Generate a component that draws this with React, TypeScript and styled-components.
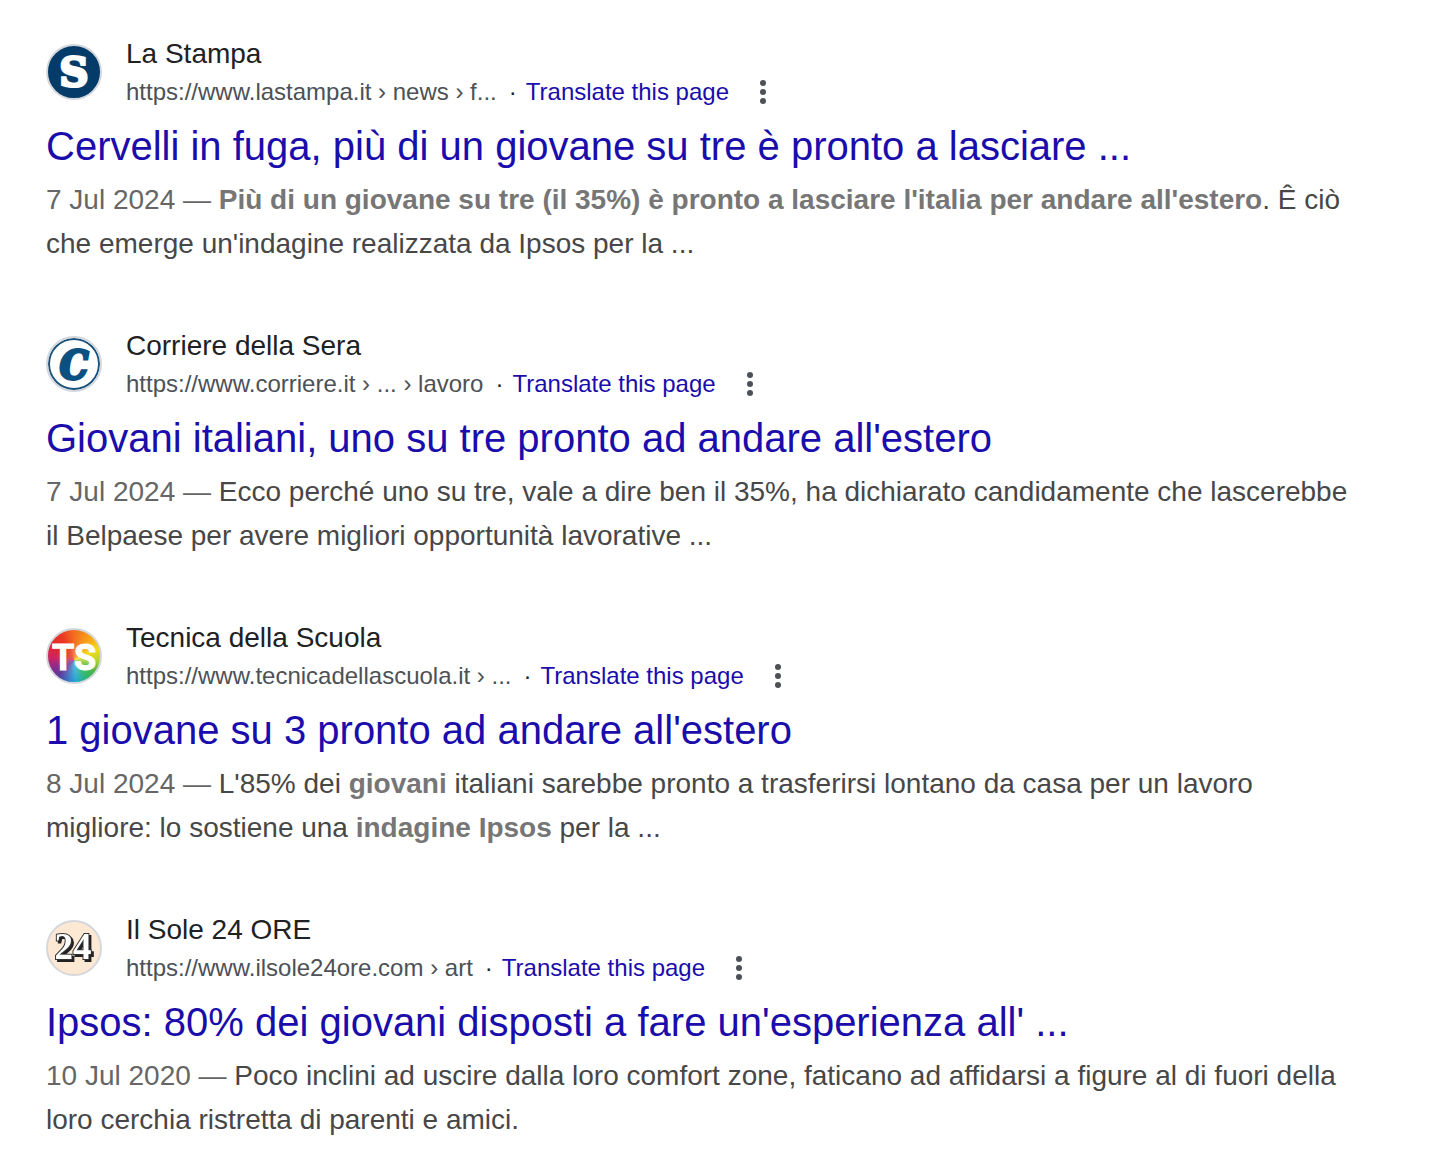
import React from 'react';
import styled, { createGlobalStyle } from 'styled-components';

const Global = createGlobalStyle`
  * { box-sizing: border-box; }
  body { margin: 0; background: #fff; font-family: "Liberation Sans", Arial, sans-serif; }
`;
const Page = styled.main`
  display: flex; flex-direction: column; gap: 60px; padding: 34px 46px 0;
`;
const Result = styled.article`
  display: flex; flex-direction: column;
`;
const Source = styled.header`
  display: flex; align-items: center; gap: 24px; height: 76px;
`;
const Badge = styled.span<{ $fill: string }>`
  flex: none; width: 56px; height: 56px; border-radius: 50%; overflow: hidden;
  border: 2px solid #d4d7dc; background: ${(p) => p.$fill};
  svg { display: block; width: 52px; height: 52px; }
`;
const SourceText = styled.div`
  display: flex; flex-direction: column;
`;
const Site = styled.span`
  font-size: 28px; line-height: 40px; color: #202124;
`;
const Meta = styled.div`
  display: flex; align-items: center; font-size: 24px; line-height: 36px; color: #4d5156; white-space: pre;
`;
const Dot = styled.span`
  padding: 0 9px 0 12px; color: #202124;
`;
const Translate = styled.a`
  color: #1a0dab; text-decoration: none;
`;
const Menu = styled.button`
  display: flex; justify-content: center; width: 24px; margin-left: 22px; padding: 0; border: 0; background: none; cursor: pointer;
`;
const Title = styled.h3`
  margin: 10px 0 0; font-size: 40px; line-height: 52px; font-weight: 400;
`;
const TitleLink = styled.a`
  color: #1a0dab; text-decoration: none;
`;
const Snippet = styled.p`
  max-width: 1304px; margin: 6px 0 0; font-size: 28px; line-height: 44px; color: #474747;
  b { color: #767676; }
`;
const DateText = styled.span`
  color: #666;
`;

const rainbow =
  'radial-gradient(circle at 50% 62%, rgba(255,255,255,.25), transparent 45%), conic-gradient(from 0deg at 50% 58%, #f36c21 0deg, #f7a416 36deg, #f4dc1c 66deg, #b5d334 90deg, #4cb848 118deg, #2bb673 145deg, #27a9d6 175deg, #3b6fc0 200deg, #5b3a9b 225deg, #8c2a8c 250deg, #d0245f 278deg, #e5262c 305deg, #ea3b24 335deg, #f36c21 360deg)';

const logos = {
  stampa: {
    fill: '#053b68',
    mark: (
      <text x="28" y="42" textAnchor="middle" fontFamily="DejaVu Serif, serif" fontWeight="700" fontSize="40" fill="#fff" stroke="#fff" strokeWidth="3">S</text>
    ),
  },
  corriere: {
    fill: '#fff',
    mark: (
      <>
        <circle cx="28" cy="28" r="25" fill="none" stroke="#17517c" strokeWidth="2" />
        <text x="28" y="43" textAnchor="middle" fontFamily="DejaVu Serif Condensed, DejaVu Serif, serif" fontStyle="italic" fontWeight="700" fontSize="40" fill="#0b5080" stroke="#0b5080" strokeWidth="3">C</text>
      </>
    ),
  },
  tecnica: {
    fill: rainbow,
    mark: (
      <text x="28" y="42" textAnchor="middle" fontFamily="Roboto, sans-serif" fontWeight="700" fontSize="36" fill="#fff" stroke="#fff" strokeWidth="1">TS</text>
    ),
  },
  sole: {
    fill: '#fde8d4',
    mark: (
      <text x="27" y="39" textAnchor="middle" fontFamily="Liberation Serif, serif" fontWeight="700" fontSize="37" fill="#fff" stroke="#333" strokeWidth="2" paintOrder="stroke" style={{ filter: 'drop-shadow(2px 2px 0 #222)' }}>24</text>
    ),
  },
};

type EntryProps = {
  logo: keyof typeof logos;
  site: string;
  url: string;
  title: string;
  date: string;
  children: React.ReactNode;
};

function Entry({ logo, site, url, title, date, children }: EntryProps) {
  return (
    <Result>
      <Source>
        <Badge $fill={logos[logo].fill}>
          <svg viewBox="2 2 52 52" aria-hidden="true">{logos[logo].mark}</svg>
        </Badge>
        <SourceText>
          <Site>{site}</Site>
          <Meta>
            <span>{url}</span>
            <Dot>·</Dot>
            <Translate href="#">Translate this page</Translate>
            <Menu type="button" aria-label="About this result">
              <svg width="8" height="26" viewBox="0 0 8 26" fill="#4d5156">
                <circle cx="4" cy="4" r="3" />
                <circle cx="4" cy="13" r="3" />
                <circle cx="4" cy="22" r="3" />
              </svg>
            </Menu>
          </Meta>
        </SourceText>
      </Source>
      <Title><TitleLink href="#">{title}</TitleLink></Title>
      <Snippet><DateText>{`${date} — `}</DateText>{children}</Snippet>
    </Result>
  );
}

export default function App() {
  return (
    <>
      <Global />
      <Page>
        <Entry logo="stampa" site="La Stampa" url="https://www.lastampa.it › news › f..." title="Cervelli in fuga, più di un giovane su tre è pronto a lasciare ..." date="7 Jul 2024">
          <b>Più di un giovane su tre (il 35%) è pronto a lasciare l'italia per andare all'estero</b>. Ê ciò che emerge un'indagine realizzata da Ipsos per la ...
        </Entry>
        <Entry logo="corriere" site="Corriere della Sera" url="https://www.corriere.it › ... › lavoro" title="Giovani italiani, uno su tre pronto ad andare all'estero" date="7 Jul 2024">
          Ecco perché uno su tre, vale a dire ben il 35%, ha dichiarato candidamente che lascerebbe il Belpaese per avere migliori opportunità lavorative ...
        </Entry>
        <Entry logo="tecnica" site="Tecnica della Scuola" url="https://www.tecnicadellascuola.it › ..." title="1 giovane su 3 pronto ad andare all'estero" date="8 Jul 2024">
          L'85% dei <b>giovani</b> italiani sarebbe pronto a trasferirsi lontano da casa per un lavoro migliore: lo sostiene una <b>indagine Ipsos</b> per la ...
        </Entry>
        <Entry logo="sole" site="Il Sole 24 ORE" url="https://www.ilsole24ore.com › art" title="Ipsos: 80% dei giovani disposti a fare un'esperienza all' ..." date="10 Jul 2020">
          Poco inclini ad uscire dalla loro comfort zone, faticano ad affidarsi a figure al di fuori della loro cerchia ristretta di parenti e amici.
        </Entry>
      </Page>
    </>
  );
}
